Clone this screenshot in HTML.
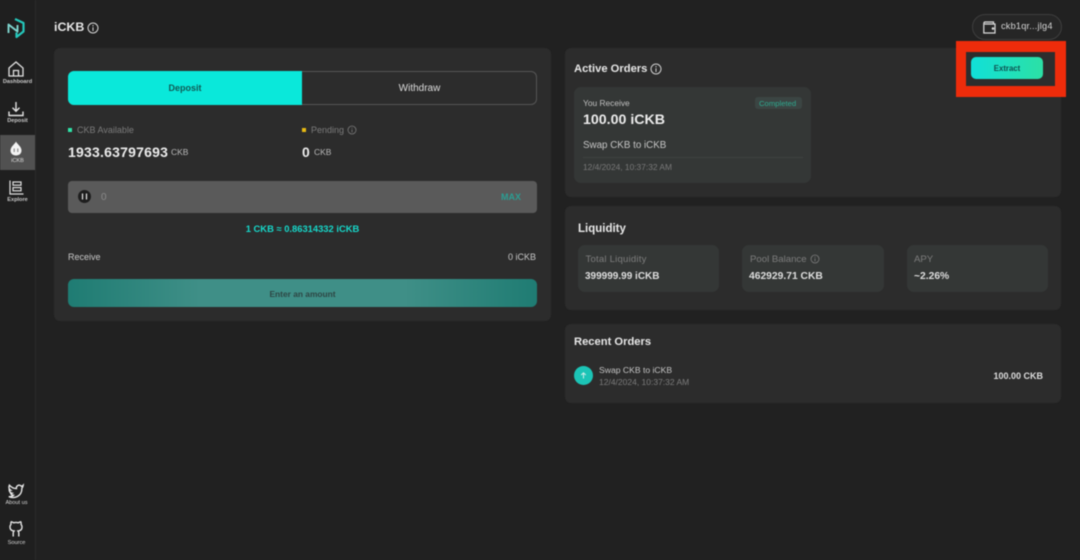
<!DOCTYPE html>
<html>
<head>
<meta charset="utf-8">
<style>
html,body{margin:0;padding:0;width:1080px;height:560px;overflow:hidden;background:#212121;}
body{font-family:"Liberation Sans","DejaVu Sans",sans-serif;position:relative;color:#e8e8e8;}
.a{position:absolute;}
.t{position:absolute;white-space:nowrap;line-height:1;}
.panel{position:absolute;background:#2c2c2c;border-radius:6px;}
.card{position:absolute;background:#343736;border-radius:7px;}
svg{position:absolute;overflow:visible;}
#blur{position:absolute;left:0;top:0;width:1080px;height:560px;filter:blur(0.4px);}
</style>
</head>
<body>
<div id="blur">
<!-- sidebar -->
<div class="a" style="left:0;top:0;width:35px;height:560px;background:#1f1f1f;border-right:1px solid #2b2b2b;"></div>
<div class="a" style="left:0;top:135px;width:35px;height:35px;background:#515151;"></div>

<svg style="left:7px;top:18px" width="18" height="20" viewBox="0 0 18 20" fill="none" stroke-linejoin="round"><path d="M8 1 L16.5 5 V13.5 L9.5 19 V14.5" stroke="#25c7bb" stroke-width="2.2"/><path d="M1.5 15 V6.5 L10.5 13.5 V7" stroke="#7fd6cf" stroke-width="1.9"/></svg>

<svg style="left:8px;top:61px" width="16" height="16" viewBox="0 0 16 16" fill="none" stroke="#e2e2e2" stroke-width="1.3"><path d="M1 7 L8 1 L15 7 V15 H1 Z"/><path d="M5.5 15 V9.5 H10.5 V15"/></svg>
<div class="t" style="left:0;width:35px;text-align:center;top:79.5px;font-size:5.6px;font-weight:bold;color:#c8c8c8;">Dashboard</div>

<svg style="left:8px;top:101px" width="16" height="16" viewBox="0 0 16 16" fill="none" stroke="#e2e2e2" stroke-width="1.4"><path d="M8 1 V10 M4.5 6.8 L8 10.3 L11.5 6.8"/><path d="M1 10.5 V14.5 H15 V10.5"/></svg>
<div class="t" style="left:0;width:35px;text-align:center;top:119px;font-size:5.6px;font-weight:bold;color:#c8c8c8;">Deposit</div>

<svg style="left:10px;top:141px" width="12" height="15" viewBox="0 0 12 15"><path d="M6 0.5 C7 3 11.5 5.5 11.5 9.5 C11.5 12.8 9 14.5 6 14.5 C3 14.5 0.5 12.8 0.5 9.5 C0.5 5.5 5 3 6 0.5 Z" fill="#f2f2f2"/><path d="M4.2 7.5 V11 M7.8 7.5 V11" stroke="#777" stroke-width="1"/></svg>
<div class="t" style="left:0;width:35px;text-align:center;top:159px;font-size:5.6px;color:#dcdcdc;">iCKB</div>

<svg style="left:9px;top:180px" width="15" height="15" viewBox="0 0 15 15" fill="none" stroke="#e2e2e2" stroke-width="1.2"><path d="M1 0.5 V14 H14.5"/><rect x="4" y="2" width="8" height="3.2"/><rect x="4" y="7.6" width="8" height="3.2"/></svg>
<div class="t" style="left:0;width:35px;text-align:center;top:198px;font-size:5.6px;font-weight:bold;color:#c8c8c8;">Explore</div>

<svg style="left:8px;top:484px" width="16" height="14" viewBox="0 0 16 14" fill="none" stroke="#e6e6e6" stroke-width="1.4"><path d="M15.2 1.2 C14.6 1.8 14 2.1 13.4 2.3 C12.4 0.9 10.6 0.8 9.4 1.8 C8.4 2.7 8.2 3.8 8.4 4.6 C5.8 4.6 3.2 3.2 1.4 1.2 C0.6 3 1 5 2.6 6.2 C2.1 6.2 1.6 6 1.2 5.8 C1.3 7.6 2.4 8.8 4 9.2 C3.5 9.4 3 9.4 2.6 9.3 C3.1 10.6 4.2 11.2 5.4 11.3 C4.2 12.4 2.4 12.8 0.8 12.6 C6 15 14 12.6 13.9 4.2 C14.5 3.6 15 2.9 15.2 1.2 Z"/></svg>
<div class="t" style="left:0;width:33px;text-align:center;top:501px;font-size:5.6px;color:#d6d6d6;">About us</div>

<svg style="left:9px;top:521px" width="14" height="16" viewBox="0 0 14 16" fill="none" stroke="#e6e6e6" stroke-width="1.4"><path d="M4.2 15.5 V12 C4.2 11 4.5 10.6 5 10 C3 9.8 1 8.8 1 6 C1 4.8 1.4 4 2 3.3 C1.8 2.6 1.8 1.6 2.2 0.8 C3.2 0.8 4 1.4 4.6 1.8 C6 1.4 8 1.4 9.4 1.8 C10 1.4 10.8 0.8 11.8 0.8 C12.2 1.6 12.2 2.6 12 3.3 C12.6 4 13 4.8 13 6 C13 8.8 11 9.8 9 10 C9.5 10.6 9.8 11 9.8 12 V15.5"/></svg>
<div class="t" style="left:0;width:33px;text-align:center;top:540.5px;font-size:5.6px;color:#d6d6d6;">Source</div>

<!-- header -->
<div class="t" style="left:54px;top:21px;font-size:12.4px;font-weight:bold;color:#e8e8e8;">iCKB</div>
<svg style="left:87px;top:22px" width="12" height="12" viewBox="0 0 12 12" fill="none" stroke="#d8d8d8" stroke-width="1"><circle cx="6" cy="6" r="5"/><path d="M6 5.2 V9 M6 3 V4.2"/></svg>

<div class="a" style="left:972px;top:14px;width:88px;height:24px;border:1px solid #3f3f3f;border-radius:13px;background:#262626;"></div>
<svg style="left:983px;top:20.5px" width="13" height="13" viewBox="0 0 13 13" fill="none" stroke="#dcdcdc" stroke-width="1.2"><path d="M10.5 3 V1 H2 C1 1 0.8 2 0.8 3 V12 H12 V3 H1.5"/><circle cx="10" cy="7.5" r="0.7"/></svg>
<div class="t" style="left:1001px;top:22px;font-size:9.2px;color:#d6d6d6;letter-spacing:.2px;">ckb1qr...jlg4</div>

<!-- left panel -->
<div class="panel" style="left:54px;top:48px;width:497px;height:273px;"></div>
<div class="a" style="left:68px;top:71px;width:467px;height:32px;border:1px solid #565656;border-radius:6px;"></div>
<div class="a" style="left:68px;top:71px;width:234px;height:34px;background:#0ae8da;border-radius:6px 0 0 6px;"></div>
<div class="t" style="left:68px;width:234px;text-align:center;top:83.5px;font-size:9px;font-weight:bold;color:#115a55;">Deposit</div>
<div class="t" style="left:302px;width:235px;text-align:center;top:83.5px;font-size:10px;color:#dcdcdc;">Withdraw</div>

<div class="a" style="left:68px;top:128px;width:4px;height:4px;background:#2fe3a8;"></div>
<div class="t" style="left:77px;top:126px;font-size:9px;color:#7b7b7b;">CKB Available</div>
<div class="t" style="left:68px;top:144.5px;font-size:14px;font-weight:bold;color:#ececec;letter-spacing:.22px;">1933.63797693</div>
<div class="t" style="left:171px;top:148px;font-size:8.5px;color:#b8b8b8;">CKB</div>

<div class="a" style="left:302px;top:128px;width:4px;height:4px;background:#e7b912;"></div>
<div class="t" style="left:311px;top:126px;font-size:9px;color:#7b7b7b;">Pending</div>
<svg style="left:347px;top:125px" width="10" height="10" viewBox="0 0 10 10" fill="none" stroke="#7b7b7b" stroke-width=".8"><circle cx="5" cy="5" r="4"/><path d="M5 4.4 V7.4 M5 2.6 V3.5"/></svg>
<div class="t" style="left:302px;top:144.5px;font-size:14px;font-weight:bold;color:#ececec;">0</div>
<div class="t" style="left:314px;top:148px;font-size:8.5px;color:#b8b8b8;">CKB</div>

<div class="a" style="left:68px;top:181px;width:469px;height:32px;background:#5a5a5a;border-radius:4px;"></div>
<div class="a" style="left:78px;top:190px;width:13px;height:13px;background:#1e1e1e;border-radius:50%;"></div>
<svg style="left:81px;top:193px" width="7" height="7" viewBox="0 0 7 7" stroke="#e8e8e8" stroke-width="1.2" fill="none"><path d="M1.5 0.5 V6.5 M5.5 0.5 V6.5"/></svg>
<div class="t" style="left:101px;top:192.5px;font-size:10px;color:#8a8a8a;">0</div>
<div class="t" style="left:501px;top:192.5px;font-size:9px;font-weight:bold;color:#2b9d92;">MAX</div>

<div class="t" style="left:68px;width:469px;text-align:center;top:223.5px;font-size:9.4px;font-weight:bold;color:#16d9cb;">1 CKB ≈ 0.86314332 iCKB</div>
<div class="t" style="left:68px;top:252.5px;font-size:9px;color:#c8c8c8;">Receive</div>
<div class="t" style="right:544px;top:252.5px;font-size:9px;color:#c8c8c8;">0 iCKB</div>

<div class="a" style="left:68px;top:279px;width:469px;height:28px;border-radius:6px;background:linear-gradient(90deg,#1f7c73,#3f8f87 28%,#3f8f87 72%,#1f7c73);"></div>
<div class="t" style="left:68px;width:469px;text-align:center;top:290px;font-size:8.4px;font-weight:bold;color:#2d4644;">Enter an amount</div>

<!-- active orders -->
<div class="panel" style="left:565px;top:48px;width:496px;height:149px;"></div>
<div class="t" style="left:574px;top:63.5px;font-size:11.2px;font-weight:bold;color:#e8e8e8;">Active Orders</div>
<svg style="left:650px;top:62.5px" width="12" height="12" viewBox="0 0 12 12" fill="none" stroke="#d0d0d0" stroke-width="1"><circle cx="6" cy="6" r="5"/><path d="M6 5.2 V9 M6 3 V4.2"/></svg>

<div class="card" style="left:574px;top:87px;width:237px;height:96px;"></div>
<div class="t" style="left:583px;top:99px;font-size:8.4px;color:#c0c0c0;">You Receive</div>
<div class="a" style="left:755px;top:97px;width:47px;height:12px;background:#3b4543;border-radius:3px;"></div>
<div class="t" style="left:759px;top:99.5px;font-size:7.7px;color:#2ea88e;">Completed</div>
<div class="t" style="left:583px;top:112.5px;font-size:14.2px;font-weight:bold;color:#ececec;">100.00 iCKB</div>
<div class="t" style="left:583px;top:140.5px;font-size:9.8px;color:#c6c6c6;">Swap CKB to iCKB</div>
<div class="a" style="left:583px;top:157px;width:220px;height:1px;background:#3f4241;"></div>
<div class="t" style="left:583px;top:163px;font-size:8.4px;color:#797979;">12/4/2024, 10:37:32 AM</div>

<!-- red highlight -->
<div class="a" style="left:956px;top:41px;width:110px;height:56px;background:#ee2c0b;"></div>
<div class="a" style="left:966px;top:52px;width:89px;height:34px;background:#2d2d2d;"></div>
<div class="a" style="left:971px;top:57px;width:72px;height:22px;border-radius:5px;background:linear-gradient(90deg,#11e0d8,#2ce0a5);"></div>
<div class="t" style="left:971px;width:72px;text-align:center;top:64.5px;font-size:7.8px;font-weight:bold;color:#0f5050;">Extract</div>

<!-- liquidity -->
<div class="panel" style="left:565px;top:206px;width:496px;height:104px;"></div>
<div class="t" style="left:578px;top:223.5px;font-size:11.5px;font-weight:bold;color:#e8e8e8;">Liquidity</div>
<div class="card" style="left:578px;top:245px;width:141px;height:47px;"></div>
<div class="t" style="left:585.5px;top:254.5px;font-size:9.6px;color:#7d7d7d;letter-spacing:.2px;">Total Liquidity</div>
<div class="t" style="left:585px;top:271.5px;font-size:10px;font-weight:bold;color:#dedede;">399999.99 iCKB</div>
<div class="card" style="left:742px;top:245px;width:142px;height:47px;"></div>
<div class="t" style="left:750px;top:254.5px;font-size:9.6px;color:#7d7d7d;">Pool Balance</div>
<svg style="left:810px;top:254px" width="10" height="10" viewBox="0 0 10 10" fill="none" stroke="#7d7d7d" stroke-width=".8"><circle cx="5" cy="5" r="4"/><path d="M5 4.4 V7.4 M5 2.6 V3.5"/></svg>
<div class="t" style="left:749px;top:271.5px;font-size:10.3px;font-weight:bold;color:#dedede;">462929.71 CKB</div>
<div class="card" style="left:907px;top:245px;width:141px;height:47px;"></div>
<div class="t" style="left:914px;top:254.5px;font-size:9.6px;color:#7d7d7d;">APY</div>
<div class="t" style="left:914px;top:271.5px;font-size:10.3px;font-weight:bold;color:#dedede;">~2.26%</div>

<!-- recent orders -->
<div class="panel" style="left:565px;top:324px;width:496px;height:79px;"></div>
<div class="t" style="left:574px;top:336.5px;font-size:11.2px;font-weight:bold;color:#e8e8e8;">Recent Orders</div>
<div class="a" style="left:574px;top:366px;width:19px;height:19px;border-radius:50%;background:#1cc4b6;"></div>
<svg style="left:580px;top:372px" width="7" height="7" viewBox="0 0 7 7" fill="none" stroke="#cfeeea" stroke-width="1"><path d="M3.5 6.5 V1 M1.2 3 L3.5 .8 L5.8 3"/></svg>
<div class="t" style="left:599px;top:365.5px;font-size:8.6px;color:#c4c4c4;">Swap CKB to iCKB</div>
<div class="t" style="left:599px;top:378px;font-size:8.5px;color:#7b7b7b;">12/4/2024, 10:37:32 AM</div>
<div class="t" style="right:37px;top:371.5px;font-size:9px;font-weight:bold;color:#dedede;">100.00 CKB</div>
</div>
</body>
</html>
